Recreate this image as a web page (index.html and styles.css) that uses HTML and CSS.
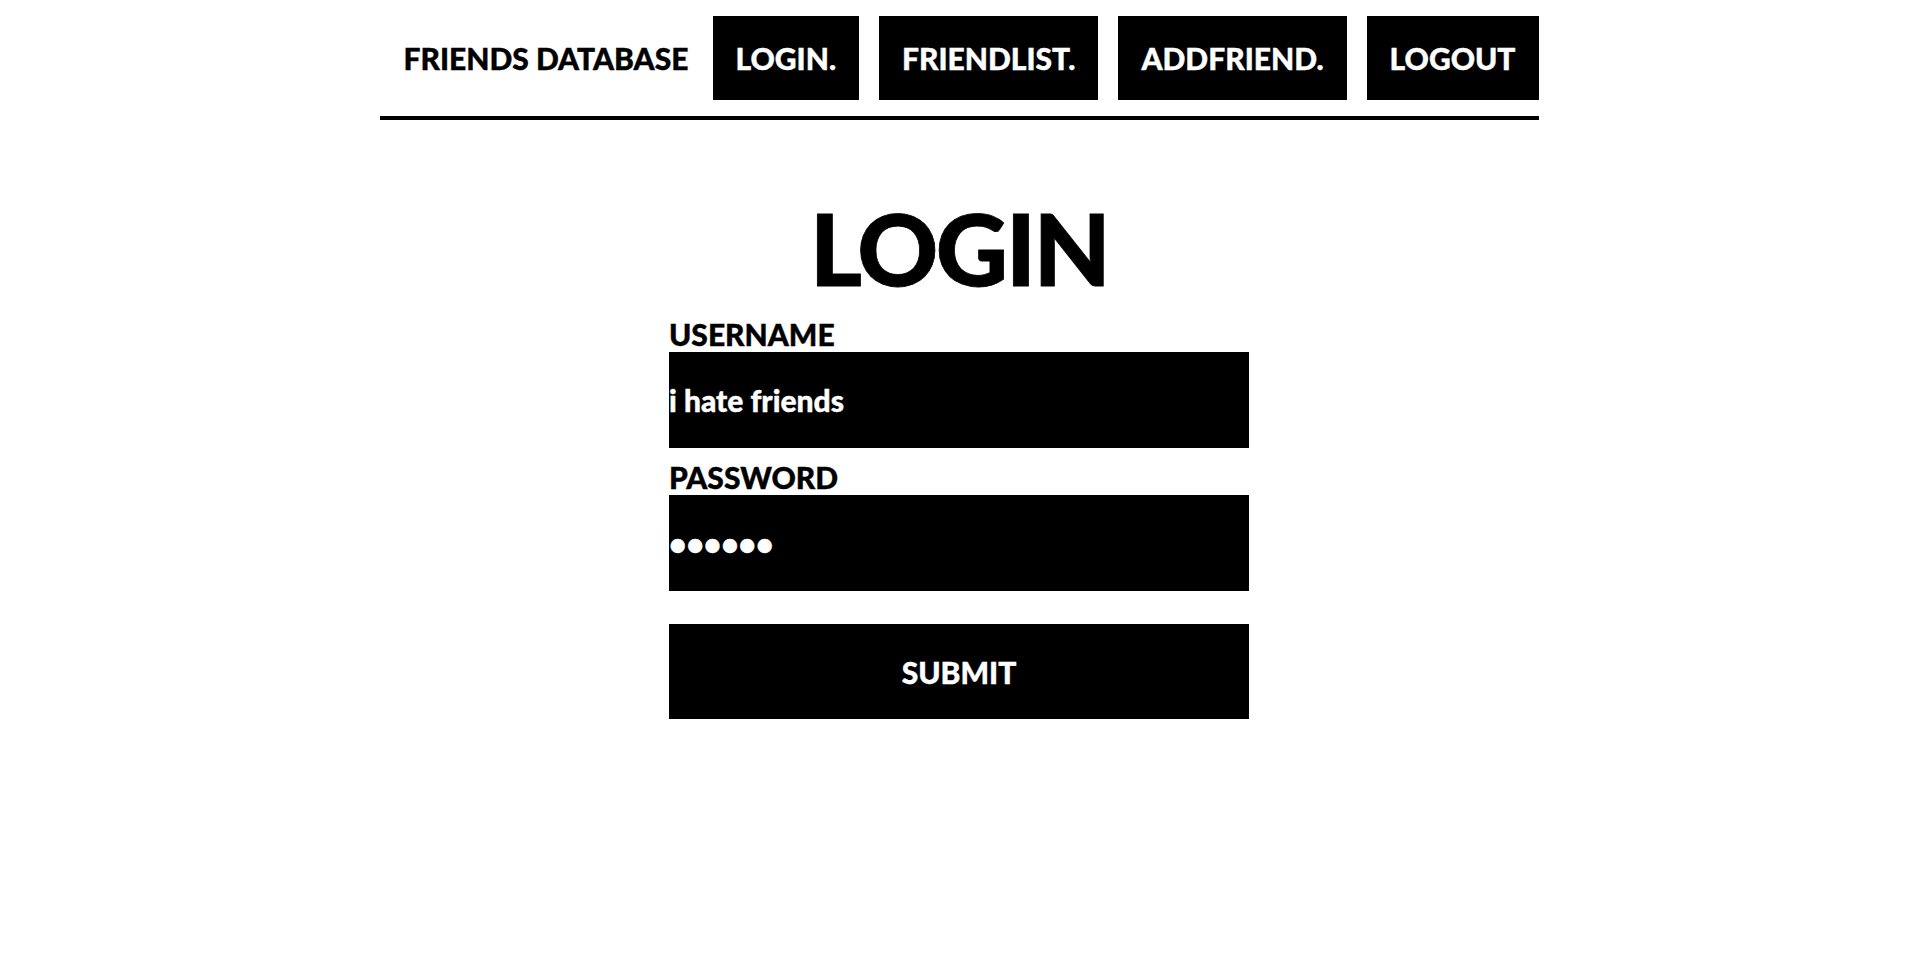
FILE: index.html
```html
<!DOCTYPE html>
<html lang="en">
<head>
<meta charset="utf-8">
<title>Friends Database</title>
<link rel="stylesheet" href="styles.css">
</head>
<body>
<nav class="nav">
  <span class="brand">FRIENDS DATABASE</span>
  <div class="links">
    <a class="link" href="#">LOGIN.</a>
    <a class="link" href="#">FRIENDLIST.</a>
    <a class="link" href="#">ADDFRIEND.</a>
    <a class="link" href="#">LOGOUT</a>
  </div>
</nav>
<main class="page">
  <h1 class="title">LOGIN</h1>
  <form class="form">
    <label class="label" for="username">USERNAME</label>
    <input class="field" id="username" type="text" value="i hate friends">
    <label class="label label-second" for="password">PASSWORD</label>
    <input class="field" id="password" type="password" value="secret">
    <button class="submit" type="button">SUBMIT</button>
  </form>
</main>
</body>
</html>
```
FILE: styles.css
```css
html, body {
  margin: 0;
  padding: 0;
  background: #fff;
  color: #000;
  font-family: Lato, "Liberation Sans", sans-serif;
  font-weight: 900;
}

.nav {
  width: 1159px;
  margin: 0 auto;
  padding: 16px 0;
  border-bottom: 4px solid #000;
  display: flex;
  align-items: center;
  justify-content: space-between;
}

.brand {
  flex-shrink: 0;
  white-space: nowrap;
  font-size: 30px;
  line-height: 36px;
  padding: 0 24px;
  -webkit-text-stroke: 0.4px #000;
}

.links {
  display: flex;
  gap: 20px;
}

.link {
  display: block;
  white-space: nowrap;
  background: #000;
  color: #fff;
  font-size: 30px;
  line-height: 36px;
  padding: 24px 23px;
  text-decoration: none;
  -webkit-text-stroke: 0.4px #fff;
}

.page {
  display: flex;
  flex-direction: column;
  align-items: center;
}

.title {
  font-size: 100px;
  line-height: 120px;
  margin: 67px 0 0;
  font-weight: 900;
  letter-spacing: -2.5px;
  -webkit-text-stroke: 0.8px #000;
}

.form {
  width: 580px;
  margin-top: 9px;
  display: flex;
  flex-direction: column;
}

.label {
  font-size: 30px;
  line-height: 36px;
  -webkit-text-stroke: 0.4px #000;
}

.label-second {
  margin-top: 11px;
}

.field {
  box-sizing: border-box;
  height: 96px;
  border: 0;
  padding: 0;
  margin: 0;
  background: #000;
  color: #fff;
  font-family: Lato, "Liberation Sans", sans-serif;
  font-weight: 900;
  font-size: 30px;
  outline: none;
  -webkit-text-stroke: 0.4px #fff;
}

.submit {
  box-sizing: border-box;
  height: 95px;
  margin-top: 33px;
  border: 0;
  padding: 0;
  background: #000;
  color: #fff;
  font-family: Lato, "Liberation Sans", sans-serif;
  font-weight: 900;
  font-size: 30px;
  -webkit-text-stroke: 0.4px #fff;
}
```
